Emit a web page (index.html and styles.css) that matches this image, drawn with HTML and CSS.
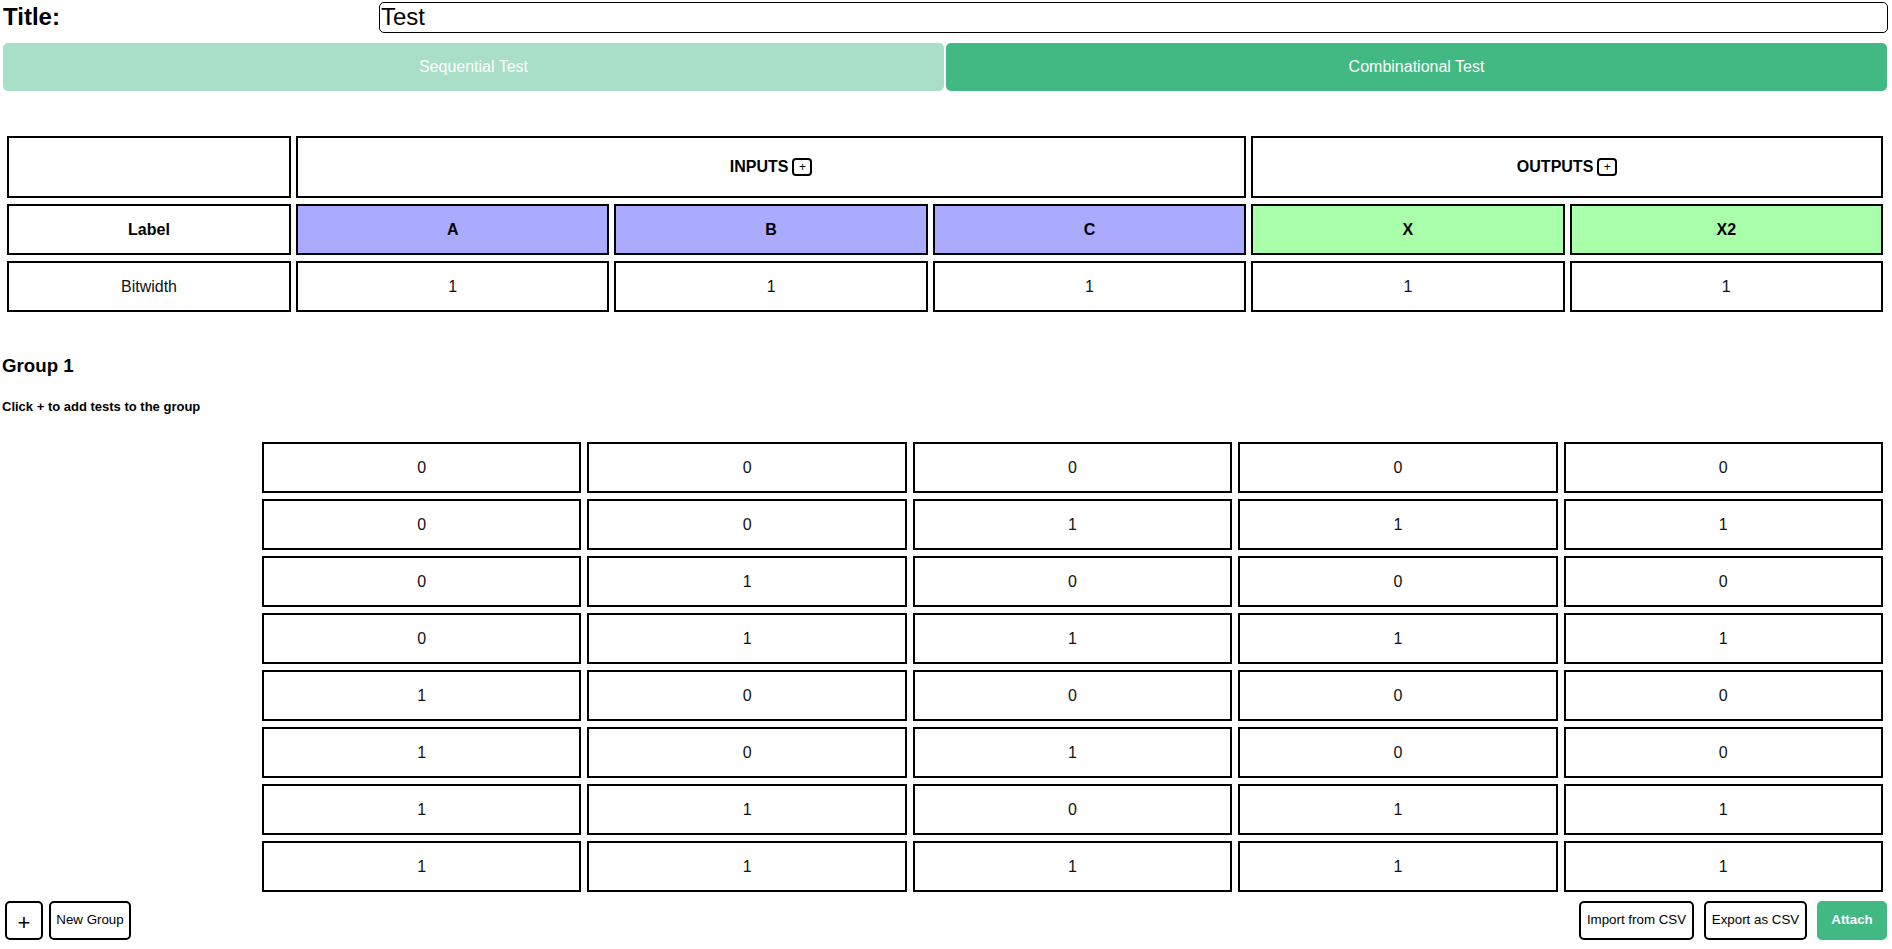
FILE: index.html
```html
<!DOCTYPE html>
<html>
<head>
<meta charset="utf-8">
<title>Test Bench</title>
<link rel="stylesheet" href="styles.css">
</head>
<body>
<div class="page">
  <div class="title-row">
    <label class="title-label">Title:</label>
    <input class="title-input" type="text" value="Test">
  </div>

  <div class="tabs">
    <button class="tab tab-inactive">Sequential Test</button>
    <button class="tab tab-active">Combinational Test</button>
  </div>

  <div class="io-table">
    <div class="cell"></div>
    <div class="cell head span3">INPUTS <span class="mini-plus">+</span></div>
    <div class="cell head span2">OUTPUTS <span class="mini-plus">+</span></div>

    <div class="cell head">Label</div>
    <div class="cell head in">A</div>
    <div class="cell head in">B</div>
    <div class="cell head in">C</div>
    <div class="cell head out">X</div>
    <div class="cell head out">X2</div>

    <div class="cell">Bitwidth</div>
    <div class="cell">1</div>
    <div class="cell">1</div>
    <div class="cell">1</div>
    <div class="cell">1</div>
    <div class="cell">1</div>
  </div>

  <h3 class="group-title">Group 1</h3>
  <p class="group-hint">Click + to add tests to the group</p>

  <div class="test-table">
    <div class="tcell">0</div><div class="tcell">0</div><div class="tcell">0</div><div class="tcell">0</div><div class="tcell">0</div>
    <div class="tcell">0</div><div class="tcell">0</div><div class="tcell">1</div><div class="tcell">1</div><div class="tcell">1</div>
    <div class="tcell">0</div><div class="tcell">1</div><div class="tcell">0</div><div class="tcell">0</div><div class="tcell">0</div>
    <div class="tcell">0</div><div class="tcell">1</div><div class="tcell">1</div><div class="tcell">1</div><div class="tcell">1</div>
    <div class="tcell">1</div><div class="tcell">0</div><div class="tcell">0</div><div class="tcell">0</div><div class="tcell">0</div>
    <div class="tcell">1</div><div class="tcell">0</div><div class="tcell">1</div><div class="tcell">0</div><div class="tcell">0</div>
    <div class="tcell">1</div><div class="tcell">1</div><div class="tcell">0</div><div class="tcell">1</div><div class="tcell">1</div>
    <div class="tcell">1</div><div class="tcell">1</div><div class="tcell">1</div><div class="tcell">1</div><div class="tcell">1</div>
  </div>

  <div class="actions">
    <div class="actions-left">
      <button class="btn btn-plus">+</button>
      <button class="btn">New Group</button>
    </div>
    <div class="actions-right">
      <button class="btn">Import from CSV</button>
      <button class="btn">Export as CSV</button>
      <button class="btn btn-attach">Attach</button>
    </div>
  </div>
</div>
</body>
</html>
```

FILE: styles.css
```css
html, body {
  margin: 0;
  padding: 0;
  background: #ffffff;
}

body {
  font-family: "Liberation Sans", Arial, sans-serif;
  color: #000;
}

.page {
  width: 1892px;
}

.title-row {
  display: flex;
  align-items: center;
  height: 33px;
}

.title-label {
  width: 379px;
  padding-left: 3px;
  box-sizing: border-box;
  font-size: 24px;
  font-weight: bold;
  line-height: 28px;
}

.title-input {
  width: 1509px;
  height: 31px;
  margin-top: 1px;
  box-sizing: border-box;
  border: 1px solid #000;
  border-radius: 5px;
  padding: 0 1px;
  font-family: "Liberation Sans", Arial, sans-serif;
  font-size: 24px;
  color: #000;
  outline: none;
}

.tabs {
  display: flex;
  gap: 2px;
  margin: 10px 5px 0 3px;
  height: 48px;
}

.tab {
  flex: 1;
  border: none;
  border-radius: 5px;
  background: #42b983;
  color: #fff;
  font-family: "Liberation Sans", Arial, sans-serif;
  font-size: 16px;
  padding: 0;
}

.tab-inactive {
  opacity: 0.45;
}

.io-table {
  display: grid;
  grid-template-columns: 284px repeat(5, 1fr);
  grid-template-rows: 62px 51px 51px;
  gap: 6px 5px;
  margin: 45px 0 0 7px;
  width: 1876px;
}

.cell {
  border: 2px solid #000;
  display: flex;
  align-items: center;
  justify-content: center;
  font-size: 16px;
  color: #111;
}

.head {
  font-weight: bold;
  color: #000;
}

.span3 {
  grid-column: span 3;
}

.span2 {
  grid-column: span 2;
}

.in {
  background: #aaaaff;
}

.out {
  background: #aaffaa;
}

.mini-plus {
  display: inline-flex;
  align-items: center;
  justify-content: center;
  width: 20px;
  height: 18px;
  box-sizing: border-box;
  margin-left: 4px;
  border: 2px solid #000;
  border-radius: 4px;
  font-size: 12px;
  font-weight: normal;
  line-height: 1;
}

.group-title {
  margin: 43px 0 0 0;
  padding-left: 2px;
  font-size: 18.72px;
  line-height: 22px;
  font-weight: bold;
}

.group-hint {
  margin: 22px 0 0 0;
  padding-left: 2px;
  font-size: 13px;
  line-height: 15px;
  font-weight: bold;
}

.test-table {
  display: grid;
  grid-template-columns: repeat(5, 1fr);
  grid-auto-rows: 51px;
  gap: 6px 6px;
  margin: 28px 0 0 262px;
  width: 1621px;
}

.tcell {
  border: 2px solid #000;
  display: flex;
  align-items: center;
  justify-content: center;
  font-size: 16px;
  color: #111;
}

.actions {
  display: flex;
  justify-content: space-between;
  margin: 9px 5px 0 5px;
}

.actions-left,
.actions-right {
  display: flex;
}

.actions-left {
  gap: 6px;
}

.actions-right {
  gap: 10px;
}

.btn {
  height: 39px;
  box-sizing: border-box;
  border: 2px solid #000;
  border-radius: 5px;
  background: #fff;
  color: #000;
  padding: 0 0 3px;
  font-family: "Liberation Sans", Arial, sans-serif;
  font-size: 13.33px;
}

.btn-new {
  width: 81px;
}

.actions-right .btn:nth-child(1) {
  width: 115px;
}

.actions-right .btn:nth-child(2) {
  width: 103px;
}

.actions-left .btn:nth-child(2) {
  width: 82px;
}

.btn-plus {
  width: 38px;
  padding: 4px 0 0;
  font-size: 22px;
  line-height: 1;
}

.btn-attach {
  border: none;
  background: #42b983;
  color: #fff;
  font-weight: bold;
  padding: 0 0 3px;
}

.actions-right .btn-attach {
  width: 70px;
}
```
